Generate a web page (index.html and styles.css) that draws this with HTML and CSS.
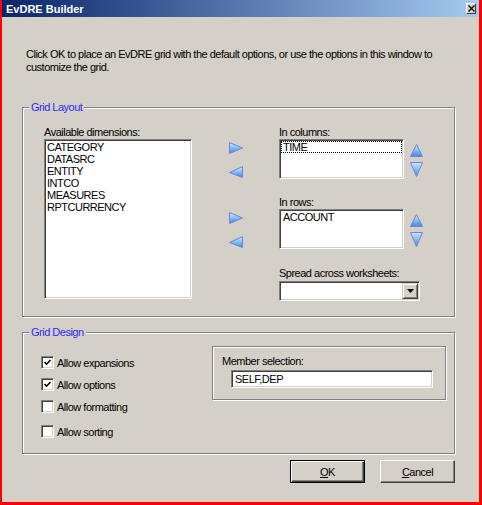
FILE: index.html
```html
<!DOCTYPE html>
<html>
<head>
    <title>EvDRE Builder</title>
    <meta charset="UTF-8">
    <link rel="stylesheet" href="styles.css">
</head>
<body>
    <div class="window">
        <!-- title bar -->
        <div class="titlebar">
            <span class="title">EvDRE Builder</span>
            <span class="close-btn">
                <svg width="7" height="7" viewBox="0 0 7 7"><path d="M0.5 0.5 L6.5 6.5 M6.5 0.5 L0.5 6.5" stroke="#000" stroke-width="1.3" fill="none"/></svg>
            </span>
        </div>

        <div class="dialog">
            <p class="intro">Click OK to place an EvDRE grid with the default options, or use the options in this window to<br>customize the grid.</p>

            <!-- Grid Layout -->
            <div class="group group-layout">
                <span class="group-title">Grid Layout</span>
                <div class="avail">
                    <div class="label">Available dimensions:</div>
                    <ul class="listbox list-avail">
                        <li>CATEGORY</li>
                        <li>DATASRC</li>
                        <li>ENTITY</li>
                        <li>INTCO</li>
                        <li>MEASURES</li>
                        <li>RPTCURRENCY</li>
                    </ul>
                </div>

                <div class="targets">
                    <div class="target">
                        <div class="label indent">In columns:</div>
                        <div class="target-row">
                            <div class="movers">
                                <svg width="14" height="12" viewBox="0 0 14 12">
                                    <defs>
                                        <linearGradient id="arrowFill" x1="0" y1="0" x2="0" y2="1">
                                            <stop offset="0" stop-color="#c4ecfc"/>
                                            <stop offset="0.45" stop-color="#86c6f0"/>
                                            <stop offset="1" stop-color="#3f86dc"/>
                                        </linearGradient>
                                    </defs>
                                    <polygon points="0.5,0.5 13.5,6 0.5,11.5" fill="url(#arrowFill)" stroke="#7b7bea"/>
                                </svg>
                                <svg width="14" height="12" viewBox="0 0 14 12"><polygon points="13.5,0.5 0.5,6.5 13.5,11.5" fill="url(#arrowFill)" stroke="#7b7bea"/></svg>
                            </div>
                            <ul class="listbox list-target">
                                <li class="focused">TIME</li>
                            </ul>
                            <div class="updown">
                                <svg width="13" height="13" viewBox="0 0 13 13"><polygon points="6.5,0.5 12.5,12.5 0.5,12.5" fill="url(#arrowFill)" stroke="#7b7bea"/></svg>
                                <svg width="13" height="15" viewBox="0 0 13 15"><polygon points="0.5,0.5 12.5,0.5 6.5,14.5" fill="url(#arrowFill)" stroke="#7b7bea"/></svg>
                            </div>
                        </div>
                    </div>

                    <div class="target">
                        <div class="label indent">In rows:</div>
                        <div class="target-row">
                            <div class="movers">
                                <svg width="14" height="12" viewBox="0 0 14 12"><polygon points="0.5,0.5 13.5,6 0.5,11.5" fill="url(#arrowFill)" stroke="#7b7bea"/></svg>
                                <svg width="14" height="12" viewBox="0 0 14 12"><polygon points="13.5,0.5 0.5,6.5 13.5,11.5" fill="url(#arrowFill)" stroke="#7b7bea"/></svg>
                            </div>
                            <ul class="listbox list-target">
                                <li class="item">ACCOUNT</li>
                            </ul>
                            <div class="updown">
                                <svg width="13" height="13" viewBox="0 0 13 13"><polygon points="6.5,0.5 12.5,12.5 0.5,12.5" fill="url(#arrowFill)" stroke="#7b7bea"/></svg>
                                <svg width="13" height="15" viewBox="0 0 13 15"><polygon points="0.5,0.5 12.5,0.5 6.5,14.5" fill="url(#arrowFill)" stroke="#7b7bea"/></svg>
                            </div>
                        </div>
                    </div>

                    <div class="spread">
                        <div class="label indent">Spread across worksheets:</div>
                        <div class="combo">
                            <span class="combo-btn">
                                <svg width="7" height="4" viewBox="0 0 7 4"><polygon points="0,0 7,0 3.5,4" fill="#000"/></svg>
                            </span>
                        </div>
                    </div>
                </div>
            </div>

            <!-- Grid Design -->
            <div class="group group-design">
                <span class="group-title">Grid Design</span>
                <div class="checks">
                    <div class="check">
                        <span class="checkbox"><svg width="9" height="9" viewBox="0 0 9 9"><polyline points="1.5,4 3.5,6.2 7.5,2" stroke="#000" stroke-width="1.6" fill="none"/></svg></span>
                        <span>Allow expansions</span>
                    </div>
                    <div class="check">
                        <span class="checkbox"><svg width="9" height="9" viewBox="0 0 9 9"><polyline points="1.5,4 3.5,6.2 7.5,2" stroke="#000" stroke-width="1.6" fill="none"/></svg></span>
                        <span>Allow options</span>
                    </div>
                    <div class="check">
                        <span class="checkbox"></span>
                        <span>Allow formatting</span>
                    </div>
                    <div class="check">
                        <span class="checkbox"></span>
                        <span>Allow sorting</span>
                    </div>
                </div>
                <div class="member">
                    <div class="label">Member selection:</div>
                    <div class="textbox">SELF,DEP</div>
                </div>
            </div>

            <div class="buttons">
                <button class="btn btn-default"><span><u>O</u>K</span></button>
                <button class="btn"><span><u>C</u>ancel</span></button>
            </div>
        </div>
    </div>
</body>
</html>
```
FILE: styles.css
```css
body {
    margin: 0;
    background: #ff0000;
    font-family: "Liberation Sans", Arial, sans-serif;
    font-size: 11px;
    letter-spacing: -0.5px;
    color: #000;
}

.window {
    margin: 0 3px 0 2px;
    height: 502px;
    background: #d4d0c8;
}

/* title bar */
.titlebar {
    height: 17px;
    display: flex;
    align-items: center;
    justify-content: space-between;
    padding: 0 3px 0 4px;
    background: linear-gradient(to right, #0a246a, #a6caf0);
}

.title {
    color: #fff;
    font-weight: bold;
    letter-spacing: 0;
}

.close-btn {
    width: 10px;
    height: 11px;
    box-sizing: border-box;
    display: flex;
    align-items: center;
    justify-content: center;
    background: #d4d0c8;
    border: 1px solid;
    border-color: #fff #404040 #404040 #fff;
}

.dialog {
    padding: 0 24px 0 20px;
}

.intro {
    margin: 31px 0 0 4px;
    line-height: 13px;
}

/* group boxes */
.group {
    position: relative;
    border: 1px solid #808080;
    box-shadow: inset 1px 1px 0 #fff, 1px 1px 0 #fff;
    box-sizing: border-box;
}

.group-title {
    position: absolute;
    top: -7px;
    left: 6px;
    padding: 0 2px;
    line-height: 13px;
    background: #d4d0c8;
    color: #2b2bff;
}

.label {
    height: 13px;
    line-height: 13px;
    white-space: nowrap;
}

.group-layout {
    display: flex;
    height: 210px;
    margin-top: 33px;
    padding: 18px 0 0 21px;
}

/* sunken boxes */
.listbox,
.textbox,
.combo,
.checkbox {
    box-sizing: border-box;
    background: #fff;
    border: 1px solid;
    border-color: #808080 #fff #fff #808080;
    box-shadow: inset 1px 1px 0 #404040, inset -1px -1px 0 #d4d0c8;
}

.listbox {
    margin: 0;
    padding: 1px;
    list-style: none;
}

.listbox li {
    line-height: 12px;
    padding-left: 1px;
}

.list-avail {
    width: 148px;
    height: 160px;
}

.targets {
    margin-left: 37px;
}

.target + .target {
    margin-top: 17px;
}

.indent {
    padding-left: 50px;
}

.target-row {
    display: flex;
}

.movers {
    width: 14px;
    display: flex;
    flex-direction: column;
    gap: 12px;
    padding-top: 3px;
}

.list-target {
    width: 125px;
    height: 40px;
    margin-left: 36px;
}

.list-target li.focused {
    border: 1px dotted #000;
    padding-left: 1px;
    line-height: 10px;
    height: 10px;
}

.list-target li.item {
    padding-left: 2px;
}

.updown {
    margin-left: 6px;
    display: flex;
    flex-direction: column;
    gap: 5px;
    padding-top: 5px;
}

.updown svg,
.movers svg {
    display: block;
}

.spread {
    margin-top: 18px;
}

.combo {
    width: 141px;
    height: 20px;
    margin: 1px 0 0 50px;
    padding: 1px;
    display: flex;
    justify-content: flex-end;
}

.combo-btn {
    width: 16px;
    height: 16px;
    box-sizing: border-box;
    display: flex;
    align-items: center;
    justify-content: center;
    background: #d4d0c8;
    border: 1px solid;
    border-color: #d4d0c8 #404040 #404040 #d4d0c8;
    box-shadow: inset 1px 1px 0 #fff, inset -1px -1px 0 #808080;
}

/* grid design */
.group-design {
    display: flex;
    height: 122px;
    margin-top: 15px;
    padding: 13px 0 0 18px;
}

.checks {
    width: 171px;
    padding-top: 10px;
    display: flex;
    flex-direction: column;
    gap: 9px;
}

.check {
    display: flex;
    align-items: center;
    gap: 3px;
    height: 13px;
}

.check:last-child {
    margin-top: 3px;
}

.checkbox {
    width: 13px;
    height: 13px;
    display: flex;
    align-items: center;
    justify-content: center;
}

.member {
    width: 234px;
    height: 54px;
    box-sizing: border-box;
    border: 1px solid #808080;
    box-shadow: inset 1px 1px 0 #fff, 1px 1px 0 #fff;
    padding: 8px 0 0 9px;
}

.textbox {
    width: 202px;
    height: 18px;
    margin: 2px 0 0 9px;
    padding-left: 3px;
    line-height: 16px;
}

/* buttons */
.buttons {
    display: flex;
    justify-content: flex-end;
    gap: 15px;
    margin-top: 6px;
}

.btn {
    width: 75px;
    height: 23px;
    box-sizing: border-box;
    padding: 0;
    font: inherit;
    letter-spacing: inherit;
    color: #000;
    background: #d4d0c8;
    border: 1px solid;
    border-color: #fff #404040 #404040 #fff;
    box-shadow: inset -1px -1px 0 #808080;
}

.btn-default {
    border: 1px solid #000;
    box-shadow: inset 1px 1px 0 #fff, inset -1px -1px 0 #404040, inset -2px -2px 0 #808080;
}
```
